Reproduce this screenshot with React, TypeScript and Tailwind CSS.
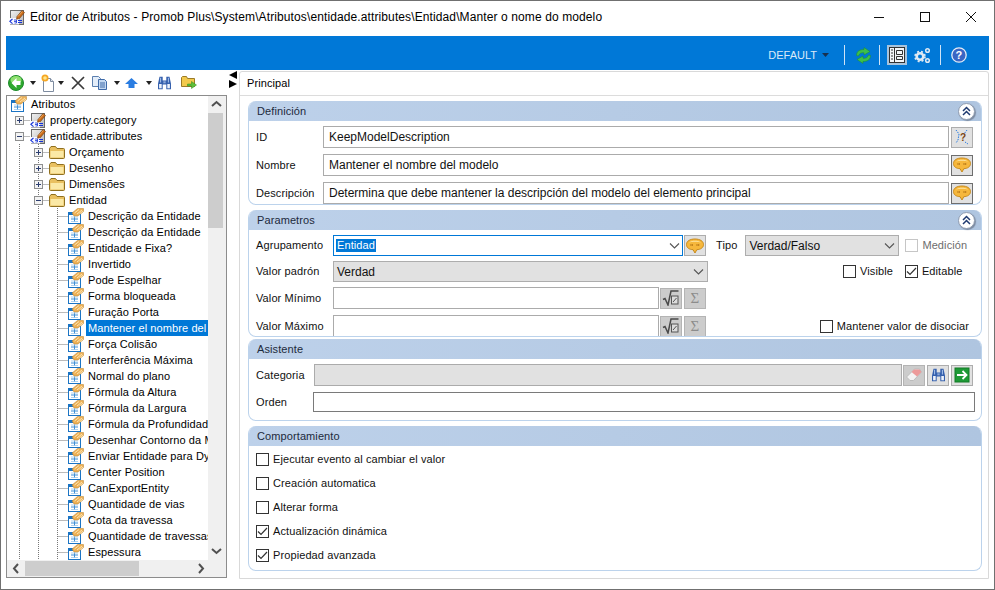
import React from "react";

const AttrIcon = () => (
  <svg width="16" height="16" viewBox="0 0 16 16" className="shrink-0">
    <defs>
      <linearGradient id="ag" x1="0" y1="0" x2="1" y2="1">
        <stop offset="0" stopColor="#f2f2f2" />
        <stop offset="1" stopColor="#b4b4b4" />
      </linearGradient>
    </defs>
    <rect x="1.5" y="1.5" width="13" height="14" fill="url(#ag)" stroke="#6a6a6a" />
    <path d="M1 9h9v6.500H1z" fill="#f8f8ff" />
    <path d="M3.500 10 L0.800 12.300 L3.500 14.600" fill="none" stroke="#1432d8" strokeWidth="1.100" />
    <path d="M5 11h2.500v3H5.500M5 12.500h2.500" fill="none" stroke="#1432d8" strokeWidth="0.800" />
    <path d="M9 11.500h4M9 13.500h4" stroke="#1432d8" strokeWidth="1" />
    <path d="M8 7.500 L13 1.500 L15.500 3.500 L10.500 9.500 L7.500 10.200Z" fill="#c96a18" stroke="#6d3a0c" strokeWidth="0.600" />
    <path d="M9 7.500 L13.500 2.500" stroke="#f2b266" strokeWidth="0.800" />
  </svg>
);
const TableIcon = () => (
  <svg width="16" height="16" viewBox="0 0 16 16" className="shrink-0">
    <rect x="0.500" y="4.500" width="12" height="11" fill="#fff" stroke="#1b74c4" />
    <rect x="0.500" y="4.500" width="12" height="2.500" fill="#1b74c4" />
    <path d="M3 11h7M6.500 8.500v5.500" stroke="#3f8fd6" strokeWidth="1" />
    <path d="M3 13.500h7M3 9h7" stroke="#9cc8ec" strokeWidth="0.800" />
    <path d="M4 5 L9.500 0.500 L15.500 0.500 L15.500 3.500 L10 8 L6 8Z" fill="#edb055" stroke="#b9802a" strokeWidth="0.500" />
    <path d="M6.500 5l4.500-3.500M9 6l5-4M11.500 6l3.500-3" stroke="#fff0c8" strokeWidth="0.800" />
  </svg>
);
const Folder = () => (
  <svg width="16" height="14" viewBox="0 0 16 14" className="shrink-0">
    <path d="M0.500 3.500 L0.500 12.500 Q0.500 13.500 1.500 13.500 L14.500 13.500 Q15.500 13.500 15.500 12.500 L15.500 4.500 Q15.500 3.500 14.500 3.500 L8 3.500 L6.500 1.500 L2 1.500Z" fill="#e9c060" stroke="#8f7020" />
    <path d="M1.500 6 L14.500 6 L14.500 12.500 L1.500 12.500Z" fill="#fbe9a6" />
  </svg>
);

function Guides({ w, lines, branch, box }: { w: number; lines: number[]; branch: number; box?: "+" | "-" }) {
  return (
    <svg width={w} height="16" viewBox={`0 0 ${w} 16`} className="shrink-0">
      {lines.map((x) => (
        <path key={x} d={`M${x + 0.5} 0V16`} stroke="#777" strokeDasharray="1 1" />
      ))}
      <path d={`M${branch + 0.5} 8.500H${w}`} stroke="#777" strokeDasharray="1 1" />
      {box && (
        <g>
          <rect x={branch - 4 + 0.5} y="4.500" width="8" height="8" fill="#f3f3f3" stroke="#8e8f8f" />
          <path d={`M${branch - 2} 8.500h5`} stroke="#2c3e70" />
          {box === "+" && <path d={`M${branch + 0.5} 6v5`} stroke="#2c3e70" />}
        </g>
      )}
    </svg>
  );
}

const leafs = [
  "Descrição da Entidade",
  "Descrição da Entidade",
  "Entidade e Fixa?",
  "Invertido",
  "Pode Espelhar",
  "Forma bloqueada",
  "Furação Porta",
  "Mantener el nombre del",
  "Força Colisão",
  "Interferência Máxima",
  "Normal do plano",
  "Fórmula da Altura",
  "Fórmula da Largura",
  "Fórmula da Profundidad",
  "Desenhar Contorno da M",
  "Enviar Entidade para Dy",
  "Center Position",
  "CanExportEntity",
  "Quantidade de vias",
  "Cota da travessa",
  "Quantidade de travessas",
  "Espessura",
];

function TreeText({ children, selected }: { children: React.ReactNode; selected?: boolean }) {
  return (
    <span className={`ml-[2px] h-4 pl-[2px] leading-4 whitespace-nowrap ${selected ? "bg-[#0078d7] text-white flex-1" : "text-black"}`}>
      {children}
    </span>
  );
}

function Tree() {
  return (
    <div className="w-[201px] h-[464px] overflow-hidden shrink-0">
      <div className="flex items-center h-4 pl-[4px]">
        <TableIcon />
        <TreeText>Atributos</TreeText>
      </div>
      <div className="flex items-center h-4">
        <Guides w={23} lines={[]} branch={12} box="+" />
        <AttrIcon />
        <TreeText>property.category</TreeText>
      </div>
      <div className="flex items-center h-4">
        <Guides w={23} lines={[]} branch={12} box="-" />
        <AttrIcon />
        <TreeText>entidade.attributes</TreeText>
      </div>
      {["Orçamento", "Desenho", "Dimensões"].map((t) => (
        <div key={t} className="flex items-center h-4">
          <Guides w={42} lines={[12, 31]} branch={31} box="+" />
          <Folder />
          <TreeText>{t}</TreeText>
        </div>
      ))}
      <div className="flex items-center h-4">
        <Guides w={42} lines={[12, 31]} branch={31} box="-" />
        <Folder />
        <TreeText>Entidad</TreeText>
      </div>
      {leafs.map((t, i) => (
        <div key={i} className="flex items-center h-4">
          <Guides w={61} lines={[12, 31, 50]} branch={50} />
          <TableIcon />
          <TreeText selected={i === 7}>{t}</TreeText>
        </div>
      ))}
    </div>
  );
}

const Chev = ({ d }: { d: string }) => (
  <svg width="17" height="17" viewBox="0 0 17 17" className="shrink-0">
    <path d={d} fill="none" stroke="#505050" strokeWidth="2" />
  </svg>
);

const Arrow = ({ cls }: { cls: string }) => (
  <svg width="6" height="4" viewBox="0 0 6 4" className={`shrink-0 ${cls}`}>
    <path d="M0 0h6L3 4z" fill="#222" />
  </svg>
);

function Binoc() {
  return (
    <g>
      <path d="M2.500 .8h3.200v3.700h3.600V.8h3.200l1.500 7v5.400H9.300V8.500H5.700v4.700H1V7.800z" fill="#3560ad" />
      <path d="M3.600 1.800v4.700M11.400 1.800v4.700" stroke="#a9c4ec" strokeWidth="1" />
      <rect x="2.100" y="8" width="2.600" height="4.300" fill="#eef3fb" />
      <rect x="10.300" y="8" width="2.600" height="4.300" fill="#eef3fb" />
      <rect x="6.300" y="5.300" width="2.400" height="2" fill="#8da9d8" />
    </g>
  );
}

function Toolbar() {
  return (
    <div className="h-[25px] flex items-center pl-[2px] shrink-0">
      <svg width="16" height="16" viewBox="0 0 16 16" className="shrink-0">
        <circle cx="8" cy="8" r="7.500" fill="#2ea82e" stroke="#1d8a2a" />
        <ellipse cx="8" cy="5" rx="5.500" ry="4" fill="#8fe070" />
        <path d="M8.500 3L3.500 8l5 5V10h4V6h-4z" fill="#fff" />
      </svg>
      <Arrow cls="ml-[6px]" />
      <svg width="16" height="18" viewBox="0 0 16 18" className="ml-[4px] shrink-0">
        <path d="M3.500 4.500h7l3 3v10h-10z" fill="#fff" stroke="#7e8ca0" />
        <path d="M10.500 4.500v3h3" fill="#dfe6ef" stroke="#7e8ca0" />
        <circle cx="5" cy="4" r="3.500" fill="#f5a623" />
        <circle cx="5" cy="4" r="1.800" fill="#ffe58a" />
      </svg>
      <Arrow cls="ml-[2px]" />
      <svg width="14" height="14" viewBox="0 0 14 14" className="ml-[7px] shrink-0">
        <path d="M1 1l12 12M13 1L1 13" stroke="#3a3a3a" strokeWidth="1.700" />
      </svg>
      <svg width="16" height="14" viewBox="0 0 16 14" className="ml-[7px] shrink-0">
        <path d="M0.500 0.500h6l2 2v8h-8z" fill="#e3edf9" stroke="#5b7fae" />
        <path d="M6.500 3.500h6l2 2v8h-8z" fill="#c4d9f2" stroke="#3e6aa8" />
        <path d="M8 7h5M8 9h5M8 11h5" stroke="#3e6aa8" />
      </svg>
      <Arrow cls="ml-[6px]" />
      <svg width="13" height="10" viewBox="0 0 13 10" className="ml-[5px] shrink-0">
        <path d="M6.500 0L13 6H9.500v4h-6V6H0z" fill="#2a7de1" />
      </svg>
      <Arrow cls="ml-[8px]" />
      <svg width="15" height="14" viewBox="0 0 15 14" className="ml-[5px] shrink-0"><Binoc /></svg>
      <svg width="16" height="15" viewBox="0 0 16 15" className="ml-[9px] shrink-0">
        <path d="M0.500 2.500v9h13v-8h-7l-1-2h-4z" fill="#f2c94c" stroke="#9b7a28" />
        <path d="M6.500 9H10.500V6.500l5 3.500-5 3.500V11H6.500z" fill="#5fbf3a" stroke="#2d8a1e" strokeWidth="0.500" />
      </svg>
    </div>
  );
}

function Bubble() {
  return (
    <svg width="18" height="16" viewBox="0 0 18 16">
      <path d="M9 1C4 1 .5 3 .5 6.500s3 5 6.500 5.200L9 15l1.800-3.300C14.500 11.500 17.500 9.800 17.500 6.500S14 1 9 1z" fill="#f6b73c" stroke="#c68a1e" />
      <path d="M3 4.500C5.500 2.300 12.500 2.300 15 4.500 12.500 3.600 5.500 3.600 3 4.500z" fill="#fde8a8" />
      <path d="M4.500 7h2.500M10.500 7h3" stroke="#a5650c" strokeWidth="1.400" strokeDasharray="1 .7" />
    </svg>
  );
}

function IconBtn({ children, disabled, dark }: { children: React.ReactNode; disabled?: boolean; dark?: boolean }) {
  return (
    <div
      className={`w-[22px] h-[21px] shrink-0 flex items-center justify-center border ${
        dark ? "border-[#6e6e6e] bg-[#e1e1e1]" : disabled ? "border-[#b4b4b4] bg-[#cccccc]" : "border-[#adadad] bg-[#e1e1e1]"
      }`}
    >
      {children}
    </div>
  );
}

const Sqrt = () => (
  <svg width="18" height="16" viewBox="0 0 18 16">
    <path d="M1 9.500l2-1 3 6.500 3-14h7.500" fill="none" stroke="#4a4a4a" strokeWidth="1.500" />
    <rect x="9.500" y="6" width="6.500" height="8" fill="#dcdcdc" stroke="#555" />
    <path d="M11 12l3.500-4" stroke="#555" />
  </svg>
);
const Sigma = () => (
  <span className="text-[15px] leading-none text-[#8c8c8c] font-['Liberation_Serif',serif]">Σ</span>
);

const Collapse = () => (
  <div className="w-[17px] h-[17px] rounded-full bg-white border border-[#8f9cb0] shadow-[1px_1px_1px_#7b8aa0] flex items-center justify-center">
    <svg width="9" height="10" viewBox="0 0 9 10">
      <path d="M1 5l3.500-3.500L8 5M1 9l3.500-3.500L8 9" fill="none" stroke="#1f3a70" strokeWidth="1.500" />
    </svg>
  </div>
);

function Section({ title, h, collapse, children }: { title: string; h: string; collapse?: boolean; children: React.ReactNode }) {
  return (
    <section className={`${h} rounded-[8px] border border-t-0 border-[#bcd3ec] flex flex-col overflow-hidden shrink-0`}>
      <div className="h-[20px] shrink-0 bg-gradient-to-r from-[#bdd1ea] to-[#afc5e0] flex items-center justify-between pl-2 pr-[6px]">
        <span className="text-[#1c2a3c]">{title}</span>
        {collapse && <Collapse />}
      </div>
      {children}
    </section>
  );
}

function Input({ value, cls = "" }: { value?: string; cls?: string }) {
  return (
    <div className={`h-[22px] border border-[#ababab] bg-white flex items-center pl-[5px] text-[12px] tracking-normal whitespace-nowrap overflow-hidden ${cls}`}>
      {value}
    </div>
  );
}

const Caret = () => (
  <svg width="11" height="6" viewBox="0 0 11 6" className="shrink-0">
    <path d="M1 .5l4.500 4.500L10 .5" fill="none" stroke="#555" strokeWidth="1.100" />
  </svg>
);

function Check({ checked, disabled }: { checked?: boolean; disabled?: boolean }) {
  return (
    <div className={`w-[13px] h-[13px] border ${disabled ? "border-[#c6c6c6]" : "border-[#333]"} bg-white shrink-0 flex items-center justify-center`}>
      {checked && (
        <svg width="11" height="11" viewBox="0 0 11 11">
          <path d="M1 5.500l3 3L10 2" fill="none" stroke="#333" strokeWidth="1.200" />
        </svg>
      )}
    </div>
  );
}

function CheckLabel({ label, checked, disabled, cls = "" }: { label: string; checked?: boolean; disabled?: boolean; cls?: string }) {
  return (
    <div className={`flex items-center h-[13px] gap-[4px] ${cls}`}>
      <Check checked={checked} disabled={disabled} />
      <span className={`leading-[13px] whitespace-nowrap ${disabled ? "text-[#6d6d6d]" : ""}`}>{label}</span>
    </div>
  );
}

const Label = ({ children, w }: { children: React.ReactNode; w: string }) => <span className={`${w} shrink-0`}>{children}</span>;

export default function App() {
  return (
    <div
      className="w-[995px] h-[590px] border border-[#707070] bg-white flex flex-col overflow-hidden text-[11px] tracking-[0.1px] text-[#111]"
      style={{ fontFamily: '"Liberation Sans", sans-serif' }}
    >
      {/* Title bar */}
      <div className="h-[35px] shrink-0 flex items-center pl-[8px] pb-[4px]">
        <AttrIcon />
        <span className="ml-[5px] text-black text-[12px] tracking-[0.11px]">
          Editor de Atributos - Promob Plus\System\Atributos\entidade.attributes\Entidad\Manter o nome do modelo
        </span>
        <div className="ml-auto flex items-center">
          <div className="w-[46px] flex justify-center">
            <svg width="10" height="10" viewBox="0 0 10 10"><path d="M0 5.500h10" stroke="#111" /></svg>
          </div>
          <div className="w-[46px] flex justify-center">
            <svg width="10" height="10" viewBox="0 0 10 10"><rect x=".5" y=".5" width="9" height="9" fill="none" stroke="#111" /></svg>
          </div>
          <div className="w-[46px] flex justify-center">
            <svg width="10" height="10" viewBox="0 0 10 10"><path d="M0 0l10 10M10 0L0 10" stroke="#111" /></svg>
          </div>
        </div>
      </div>
      <div className="flex-1 flex flex-col px-[5px] min-h-0">
        {/* Blue bar */}
        <div className="h-[34px] shrink-0 bg-[#0078d7] flex items-center justify-end pr-[22px] pt-[4px]">
          <span className="text-[#dbe9f8] tracking-normal mt-[1px]">DEFAULT</span>
          <svg width="7" height="4" viewBox="0 0 7 4" className="ml-[5px] mr-[15px]"><path d="M0 0h7L3.500 4z" fill="#17304f" /></svg>
          <div className="w-px h-[20px] bg-[#cfe3f6]" />
          <svg width="17" height="17" viewBox="0 0 17 17" className="ml-[10px] mr-[7px]">
            <path d="M1.500 8.500C1.500 4 5 2.500 9 2.500V0.500L15 4.500L9 8V5.800C6.500 5.500 4.500 6 3.500 9z" fill="#3cc04c" stroke="#1f8a2c" strokeWidth="0.500" />
            <path d="M15.500 8.500C15.500 13 12 14.500 8 14.500V16.500L2 12.500L8 9V11.200C10.500 11.500 12.500 11 13.500 8z" fill="#3cc04c" stroke="#1f8a2c" strokeWidth="0.500" />
          </svg>
          <div className="w-px h-[20px] bg-[#cfe3f6]" />
          <div className="ml-[7px] w-[20px] h-[20px] bg-[#a9c4dc] flex items-center justify-center">
            <svg width="16" height="16" viewBox="0 0 16 16">
              <rect x=".5" y=".5" width="15" height="15" fill="#f4f6f8" stroke="#333" />
              <path d="M5.500 .5v15M7.500 3.500h6v4h-6zM7.500 9.500h6v3h-6z" fill="none" stroke="#333" />
              <path d="M2 3h2M2 6h2M2 9h2M2 12h2" stroke="#333" />
            </svg>
          </div>
          <svg width="17" height="17" viewBox="0 0 17 17" className="ml-[7px] mr-[9px]">
            <circle cx="6" cy="9.500" r="3.300" fill="none" stroke="#dfe9f3" strokeWidth="2.600" />
            <circle cx="6" cy="9.500" r="5" fill="none" stroke="#dfe9f3" strokeWidth="1.600" strokeDasharray="2 2" />
            <circle cx="13.500" cy="3.500" r="1.800" fill="none" stroke="#dfe9f3" strokeWidth="1.500" />
            <circle cx="13.500" cy="13.500" r="1.800" fill="none" stroke="#dfe9f3" strokeWidth="1.500" />
          </svg>
          <div className="w-px h-[20px] bg-[#cfe3f6]" />
          <svg width="16" height="16" viewBox="0 0 16 16" className="ml-[10px]">
            <circle cx="8" cy="8" r="7.200" fill="#3a66c4" stroke="#e4ecf6" strokeWidth="1.300" />
            <text x="8" y="12" textAnchor="middle" fontSize="11" fontWeight="700" fill="#fff" fontFamily="Liberation Sans">?</text>
          </svg>
        </div>

        <div className="flex-1 flex min-h-0 pb-[10px]">
          {/* Left */}
          <div className="w-[221px] shrink-0 flex flex-col">
            <Toolbar />
            <div className="h-[483px] border border-[#8c8c8c] bg-[#f0f0f0] flex flex-col">
              <div className="flex flex-1 min-h-0">
                <div className="bg-white w-[201px]"><Tree /></div>
                <div className="w-[17px] flex flex-col justify-between shrink-0">
                  <div className="flex flex-col">
                    <Chev d="M4 10l4.500-4L13 10" />
                    <div className="h-[115px] w-[15px] bg-[#cdcdcd]" />
                  </div>
                  <Chev d="M4 6l4.500 4L13 6" />
                </div>
              </div>
              <div className="h-[17px] flex items-center shrink-0">
                <Chev d="M11 4L7 8.500l4 4.500" />
                <div className="h-[15px] w-[114px] bg-[#cdcdcd] ml-[1px]" />
                <div className="flex-1" />
                <Chev d="M7 4l4 4.500L7 13" />
                <div className="w-[17px]" />
              </div>
            </div>
          </div>
          {/* Splitter */}
          <div className="w-[12px] shrink-0 flex flex-col items-center pt-[1px] gap-[1px]">
            <svg width="8" height="8" viewBox="0 0 8 8"><path d="M8 0v8L0 4z" fill="#000" /></svg>
            <svg width="8" height="8" viewBox="0 0 8 8"><path d="M0 0v8l8-4z" fill="#000" /></svg>
          </div>
          {/* Right */}
          <div className="flex-1 mt-[1px] border border-[#d9d9d9] rounded-t-[3px] flex flex-col min-w-0">
            <div className="h-[24px] shrink-0 border-b border-[#dcdcdc] flex items-center pl-[7px] text-black">Principal</div>
            <div className="flex-1 flex flex-col pl-[8px] pr-[6px] pt-[5px]">
              <Section title="Definición" h="h-[104px] mb-[5px]" collapse>
                <div className="flex flex-col gap-[6px] pt-[5px] pl-[7px] pr-[8px]">
                  <div className="flex items-center gap-[2px]">
                    <Label w="w-[65px]">ID</Label>
                    <Input value="KeepModelDescription" cls="flex-1" />
                    <IconBtn>
                      <svg width="16" height="16" viewBox="0 0 16 16">
                        <path d="M2 1l3 4-1 6-2 3M13 1l-3 4M11 13l3 2" fill="none" stroke="#2a7de1" strokeDasharray="1.500 1" />
                        <text x="9" y="12" textAnchor="middle" fontSize="10" fontWeight="700" fill="#7a4310" fontFamily="Liberation Sans">?</text>
                      </svg>
                    </IconBtn>
                  </div>
                  <div className="flex items-center gap-[2px]">
                    <Label w="w-[65px]">Nombre</Label>
                    <Input value="Mantener el nombre del modelo" cls="flex-1" />
                    <IconBtn dark><Bubble /></IconBtn>
                  </div>
                  <div className="flex items-center gap-[2px]">
                    <Label w="w-[65px]">Descripción</Label>
                    <Input value="Determina que debe mantener la descripción del modelo del elemento principal" cls="flex-1" />
                    <IconBtn dark><Bubble /></IconBtn>
                  </div>
                </div>
              </Section>
              <Section title="Parametros" h="h-[127px] mb-[2px]" collapse>
                <div className="flex flex-col pt-[5px] pl-[7px] pr-[6px]">
                  <div className="flex items-center h-[21px]">
                    <Label w="w-[77px]">Agrupamento</Label>
                    <div className="w-[350px] h-[21px] border border-[#0078d7] bg-white flex items-center justify-between pl-[2px] pr-[2px]">
                      <span className="bg-[#0078d7] text-white px-[1px] leading-[13px]">Entidad</span>
                      <Caret />
                    </div>
                    <div className="ml-[1px]"><IconBtn><Bubble /></IconBtn></div>
                    <span className="ml-[10px]">Tipo</span>
                    <div className="ml-[8px] w-[154px] h-[21px] border border-[#adadad] bg-[#e1e1e1] flex items-center justify-between pl-[3px] pr-[3px] text-[12px] tracking-normal">
                      <span>Verdad/Falso</span>
                      <Caret />
                    </div>
                    <div className="ml-[6px]"><CheckLabel label="Medición" disabled /></div>
                  </div>
                  <div className="flex items-center h-[21px] mt-[5px]">
                    <Label w="w-[77px]">Valor padrón</Label>
                    <div className="w-[375px] h-[21px] border border-[#adadad] bg-[#e1e1e1] flex items-center justify-between pl-[3px] pr-[3px] text-[12px] tracking-normal">
                      <span>Verdad</span>
                      <Caret />
                    </div>
                    <CheckLabel label="Visible" cls="ml-[135px]" />
                    <CheckLabel label="Editable" checked cls="ml-[12px]" />
                  </div>
                  <div className="flex items-center h-[22px] mt-[5px]">
                    <Label w="w-[77px]">Valor Mínimo</Label>
                    <Input cls="w-[326px]" />
                    <div className="ml-[1px]"><IconBtn disabled><Sqrt /></IconBtn></div>
                    <div className="ml-[2px]"><IconBtn disabled><Sigma /></IconBtn></div>
                  </div>
                  <div className="flex items-center h-[22px] mt-[6px]">
                    <Label w="w-[77px]">Valor Máximo</Label>
                    <Input cls="w-[326px] border-b-0" />
                    <div className="ml-[1px]"><IconBtn disabled><Sqrt /></IconBtn></div>
                    <div className="ml-[2px]"><IconBtn disabled><Sigma /></IconBtn></div>
                    <CheckLabel label="Mantener valor de disociar" cls="ml-auto mr-[6px]" />
                  </div>
                </div>
              </Section>
              <Section title="Asistente" h="h-[82px] mb-[5px]">
                <div className="flex flex-col pt-[5px] pl-[7px] pr-[6px]">
                  <div className="flex items-center gap-[1px] pr-[2px]">
                    <Label w="w-[57px]">Categoria</Label>
                    <div className="flex-1 h-[22px] border border-[#ababab] bg-[#e1e1e1]" />
                    <IconBtn disabled>
                      <svg width="18" height="16" viewBox="0 0 18 16">
                        <path d="M1.500 10l8-8 5 0 2 3-8 8.500H5z" fill="#f3f3f3" stroke="#bbb" />
                        <path d="M9 2.500h5.500l2 2.500-4.500 4.500-5.500-4.500z" fill="#ec9a9a" />
                      </svg>
                    </IconBtn>
                    <div className="ml-[1px]">
                      <IconBtn><svg width="15" height="14" viewBox="0 0 15 14"><Binoc /></svg></IconBtn>
                    </div>
                    <div className="ml-[1px]">
                      <IconBtn>
                        <svg width="16" height="16" viewBox="0 0 16 16">
                          <rect x="1" y="1" width="14" height="14" fill="#1e9a36" stroke="#127a26" />
                          <path d="M3 8h9M8.500 4l4 4-4 4" fill="none" stroke="#fff" strokeWidth="1.800" />
                        </svg>
                      </IconBtn>
                    </div>
                  </div>
                  <div className="flex items-center mt-[6px]">
                    <Label w="w-[57px]">Orden</Label>
                    <div className="flex-1 h-[20px] border border-[#7a7a7a] bg-white" />
                  </div>
                </div>
              </Section>
              <Section title="Comportamiento" h="h-[145px]">
                <div className="flex flex-col gap-[11px] pt-[7px] pl-[7px]">
                  <CheckLabel label="Ejecutar evento al cambiar el valor" />
                  <CheckLabel label="Creación automatica" />
                  <CheckLabel label="Alterar forma" />
                  <CheckLabel label="Actualización dinámica" checked />
                  <CheckLabel label="Propiedad avanzada" checked />
                </div>
              </Section>
            </div>
          </div>
        </div>
      </div>
    </div>
  );
}
